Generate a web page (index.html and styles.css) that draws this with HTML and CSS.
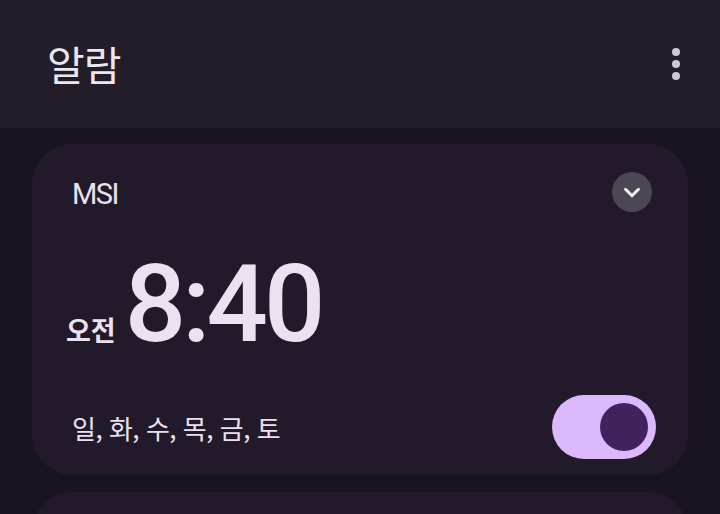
FILE: index.html
```html
<!DOCTYPE html>
<html lang="ko">
<head>
  <meta charset="UTF-8">
  <title>알람</title>
  <link rel="stylesheet" href="styles.css">
</head>
<body>
  <header class="appbar">
    <h1 class="title">알람</h1>
    <button class="more-btn" type="button" aria-label="더보기">
      <span class="dot"></span>
      <span class="dot"></span>
      <span class="dot"></span>
    </button>
  </header>

  <main class="alarm-list">
    <!-- 알람 카드 -->
    <section class="card">
      <div class="card-top">
        <span class="label">MSI</span>
        <button class="expand-btn" type="button" aria-label="펼치기">
          <svg width="26" height="26" viewBox="0 0 24 24"><path d="M6 9.5l6 6 6-6" fill="none" stroke="#f3edf7" stroke-width="2.8" stroke-linecap="round" stroke-linejoin="round"/></svg>
        </button>
      </div>
      <div class="time-row">
        <span class="ampm">오전</span>
        <span class="time">8:40</span>
      </div>
      <div class="card-bottom">
        <span class="days">일, 화, 수, 목, 금, 토</span>
        <div class="switch on"><span class="knob"></span></div>
      </div>
    </section>

    <section class="card"></section>
  </main>
</body>
</html>
```

FILE: styles.css
```css
body {
  margin: 0;
  background: #19141f;
  color: #ebe1ef;
  font-family: Roboto, "Noto Sans CJK KR", sans-serif;
  overflow: hidden;
}

.appbar {
  height: 128px;
  background: #221d29;
  display: flex;
  align-items: center;
  justify-content: space-between;
  padding: 0 32px 0 47px;
}

.title {
  margin: 0;
  font-family: "Noto Sans CJK KR", sans-serif;
  font-size: 41px;
  font-weight: 400;
  color: #ece6f0;
  letter-spacing: -1px;
  padding-bottom: 2px;
}

.more-btn {
  background: none;
  border: none;
  padding: 6px 8px;
  display: flex;
  flex-direction: column;
  gap: 4px;
  cursor: pointer;
}

.dot {
  width: 8px;
  height: 8px;
  border-radius: 50%;
  background: #cec7d6;
}

.alarm-list {
  padding: 16px 32px;
  display: flex;
  flex-direction: column;
  gap: 17px;
}

.card {
  background: #221a2b;
  border-radius: 40px;
  padding: 28px 32px 16px 40px;
  min-height: 200px;
}

.card-top {
  display: flex;
  align-items: center;
  justify-content: space-between;
  height: 40px;
}

.label {
  font-size: 29px;
  color: #ebe1ef;
  letter-spacing: -1.5px;
  padding-top: 4px;
}

.expand-btn {
  width: 40px;
  height: 40px;
  border-radius: 50%;
  border: none;
  background: #4c4655;
  display: flex;
  align-items: center;
  justify-content: center;
  padding: 0;
  margin-right: 4px;
  cursor: pointer;
}

.time-row {
  display: flex;
  align-items: baseline;
  margin-top: 44px;
  height: 96px;
}

.ampm {
  font-family: "Noto Sans CJK KR", sans-serif;
  font-size: 27px;
  font-weight: 700;
  margin-left: -6px;
  margin-right: 9px;
}

.time {
  font-size: 108px;
  line-height: 96px;
  letter-spacing: -4px;
  font-weight: 500;
  color: #ebe1ef;
}

.card-bottom {
  display: flex;
  align-items: center;
  justify-content: space-between;
  margin-top: 43px;
}

.days {
  font-family: "Noto Sans CJK KR", sans-serif;
  font-size: 26px;
  letter-spacing: -0.5px;
}

.switch {
  width: 104px;
  height: 64px;
  border-radius: 32px;
  background: #dcb8fc;
  display: flex;
  align-items: center;
  justify-content: flex-end;
  padding: 0 8px;
  box-sizing: border-box;
}

.knob {
  width: 48px;
  height: 48px;
  border-radius: 50%;
  background: #43215f;
}
```
